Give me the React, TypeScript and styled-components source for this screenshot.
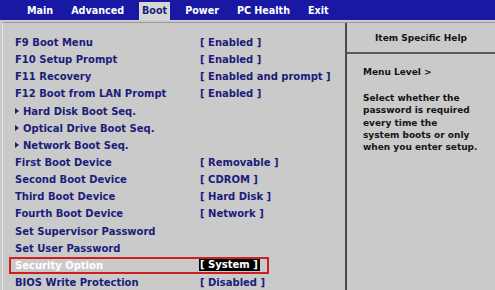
import React from "react";
import styled, { createGlobalStyle } from "styled-components";

const navy = "#1c1c7a";
const panelGray = "#cacaca";

const GlobalStyle = createGlobalStyle`
  html, body {
    margin: 0;
    padding: 0;
    background: ${panelGray};
  }
`;

const Screen = styled.div`
  width: 495px;
  height: 290px;
  overflow: hidden;
  background: ${panelGray};
  font-family: "DejaVu Sans", Verdana, sans-serif;
  font-weight: bold;
  display: flex;
  flex-direction: column;
`;

const MenuBar = styled.div`
  height: 20px;
  flex-shrink: 0;
  background: #1818a4;
  display: flex;
  align-items: flex-end;
  padding-left: 24px;
  gap: 12px;
`;

const Tab = styled.div<{ $active?: boolean }>`
  height: 18px;
  line-height: 18px;
  padding: 0 3px;
  font-size: 9.6px;
  color: ${(p) => (p.$active ? navy : "#ffffff")};
  background: ${(p) => (p.$active ? "#d6d6d6" : "transparent")};
`;

const Frame = styled.div`
  flex: 1;
  margin-top: 2px;
  margin-left: 2px;
  border-top: 1px solid #9a9a9a;
  border-left: 1px solid #e6e6e6;
  display: grid;
  grid-template-columns: 342px 1fr;
`;

const LeftPanel = styled.div`
  padding-top: 11px;
  padding-left: 8px;
`;

const Row = styled.div<{ $selected?: boolean }>`
  height: 17.15px;
  display: grid;
  grid-template-columns: 184px 1fr;
  align-items: center;
  font-size: 10px;
  color: ${(p) => (p.$selected ? "#ffffff" : navy)};
  margin-left: ${(p) => (p.$selected ? "-2px" : "0")};
  padding-left: 4px;
  width: ${(p) => (p.$selected ? "260px" : "auto")};
  box-sizing: border-box;
  border: ${(p) => (p.$selected ? "2px solid #cc1f24" : "0")};
  white-space: nowrap;
`;

const Label = styled.span`
  display: flex;
  align-items: center;
`;

const Arrow = styled.span`
  width: 0;
  height: 0;
  border-top: 3px solid transparent;
  border-bottom: 3px solid transparent;
  border-left: 4px solid ${navy};
  margin-right: 4px;
`;

const Value = styled.span<{ $selected?: boolean }>`
  justify-self: start;
  padding: 0 2px 0 1px;
  background: ${(p) => (p.$selected ? "#000000" : "transparent")};
  color: ${(p) => (p.$selected ? "#ffffff" : navy)};
  line-height: 12px;
`;

const RightPanel = styled.div`
  border-left: 2px solid #4a4a4a;
  display: flex;
  flex-direction: column;
`;

const HelpHeader = styled.div`
  height: 29px;
  border-bottom: 2px solid #5a5a5a;
  display: flex;
  align-items: center;
  justify-content: center;
  font-size: 9px;
  color: #141414;
`;

const HelpBody = styled.div`
  padding: 12px 0 0 16px;
  font-size: 9px;
  color: #141414;
  line-height: 12.2px;
`;

const HelpPara = styled.p`
  margin: 0 0 14px;
`;

type Item = { label: string; value?: string; arrow?: boolean; selected?: boolean };

const items: Item[] = [
  { label: "F9 Boot Menu", value: "[ Enabled ]" },
  { label: "F10 Setup Prompt", value: "[ Enabled ]" },
  { label: "F11 Recovery", value: "[ Enabled and prompt ]" },
  { label: "F12 Boot from LAN Prompt", value: "[ Enabled ]" },
  { label: "Hard Disk Boot Seq.", arrow: true },
  { label: "Optical Drive Boot Seq.", arrow: true },
  { label: "Network Boot Seq.", arrow: true },
  { label: "First Boot Device", value: "[ Removable ]" },
  { label: "Second Boot Device", value: "[ CDROM ]" },
  { label: "Third Boot Device", value: "[ Hard Disk ]" },
  { label: "Fourth Boot Device", value: "[ Network ]" },
  { label: "Set Supervisor Password" },
  { label: "Set User Password" },
  { label: "Security Option", value: "[ System ]", selected: true },
  { label: "BIOS Write Protection", value: "[ Disabled ]" },
];

const tabs = ["Main", "Advanced", "Boot", "Power", "PC Health", "Exit"];

export default function App() {
  return (
    <>
      <GlobalStyle />
      <Screen>
        <MenuBar>
          {tabs.map((t) => (
            <Tab key={t} $active={t === "Boot"}>
              {t}
            </Tab>
          ))}
        </MenuBar>
        <Frame>
          <LeftPanel>
            {items.map((it) => (
              <Row key={it.label} $selected={it.selected}>
                <Label>
                  {it.arrow && <Arrow />}
                  {it.label}
                </Label>
                {it.value && <Value $selected={it.selected}>{it.value}</Value>}
              </Row>
            ))}
          </LeftPanel>
          <RightPanel>
            <HelpHeader>Item Specific Help</HelpHeader>
            <HelpBody>
              <HelpPara>Menu Level &gt;</HelpPara>
              <HelpPara>
                Select whether the
                <br />
                password is required
                <br />
                every time the
                <br />
                system boots or only
                <br />
                when you enter setup.
              </HelpPara>
            </HelpBody>
          </RightPanel>
        </Frame>
      </Screen>
    </>
  );
}
